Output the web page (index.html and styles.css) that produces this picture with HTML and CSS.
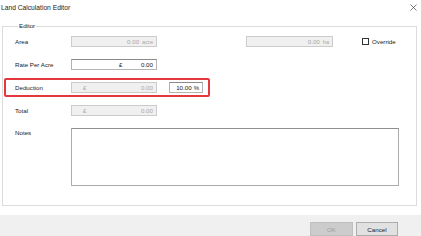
FILE: index.html
```html
<!DOCTYPE html>
<html>
<head>
<meta charset="utf-8">
<link rel="stylesheet" href="styles.css">
</head>
<body>
<div class="window">
  <div class="titlebar">
    <span class="title">Land Calculation Editor</span>
    <svg class="close" width="7" height="7" viewBox="0 0 7 7"><path d="M0.5 0.5L6.5 6.5M6.5 0.5L0.5 6.5" stroke="#444" stroke-width="0.7" fill="none"/></svg>
  </div>
  <div class="content">
    <fieldset class="group">
      <legend class="legend">Editor</legend>
      <div class="rows">
        <div class="row">
          <span class="label">Area</span>
          <div class="box disabled w86"><span class="num">0.00</span><span class="unit">acre</span></div>
          <div class="box disabled w87 ml-ha"><span class="num">0.00</span><span class="unit">ha</span></div>
          <span class="check"></span><span class="check-label">Override</span>
        </div>
        <div class="row">
          <span class="label">Rate Per Acre</span>
          <div class="box w86 boxed"><span class="cur cur-near">£</span><span class="num">0.00</span></div>
        </div>
        <div class="row">
          <span class="label">Deduction</span>
          <div class="box disabled w86"><span class="cur">£</span><span class="num">0.00</span></div>
          <div class="box boxed w34 ml-pct"><span class="num">10.00</span><span class="unit pct">%</span></div>
        </div>
        <div class="row">
          <span class="label">Total</span>
          <div class="box disabled w86"><span class="cur">£</span><span class="num">0.00</span></div>
        </div>
        <div class="row notes-row">
          <span class="label notes-label">Notes</span>
          <div class="notes"></div>
        </div>
      </div>
    </fieldset>
  </div>
  <div class="footer">
    <button class="btn btn-disabled">OK</button>
    <button class="btn">Cancel</button>
  </div>
  <div class="highlight"></div>
</div>
</body>
</html>
```

FILE: styles.css
```css
html, body {
  margin: 0;
  padding: 0;
  background: #ffffff;
}
.window {
  position: relative;
  width: 421px;
  height: 236px;
  display: flex;
  flex-direction: column;
  background: #ffffff;
  font-family: "Liberation Sans", Arial, sans-serif;
  font-size: 6.2px;
  color: #1a1a1a;
  overflow: hidden;
}
.titlebar {
  height: 14px;
  display: flex;
  align-items: center;
  justify-content: space-between;
  padding: 0 4px 0 1px;
}
.title {
  font-size: 6.7px;
  color: #1a1a1a;
}
.close {
  display: block;
}
.content {
  flex: 1;
  padding: 8px 4px 9px 2px;
  display: flex;
}
.group {
  flex: 1;
  margin: 0;
  padding: 6px 12px 0 12px;
  border: 1px solid #dcdcdc;
  min-width: 0;
}
.legend {
  margin-left: 3px;
  padding: 0 1px;
  line-height: 8px;
  font-size: 6.2px;
}
.rows {
  display: flex;
  flex-direction: column;
  gap: 12px;
}
.row {
  display: flex;
  align-items: center;
  height: 11px;
}
.label {
  width: 56px;
  flex: none;
}
.box {
  box-sizing: border-box;
  height: 11px;
  display: flex;
  align-items: center;
  justify-content: flex-end;
  padding: 0 3px;
  border: 1px solid #cccccc;
  background: #f0f0f0;
  color: #a8a8a8;
}
.boxed {
  background: #ffffff;
  border-color: #b4b4b4;
  border-top-color: #8a8a8a;
  color: #1a1a1a;
}
.w86 { width: 86px; }
.w87 { width: 87px; }
.w34 { width: 34px; }
.ml-ha { margin-left: 89px; }
.ml-pct { margin-left: 12px; }
.unit {
  margin-left: 3px;
  font-size: 5.6px;
}
.pct {
  margin-left: 2px;
  font-size: 6px;
}
.cur {
  margin-right: auto;
  margin-left: 8px;
}
.cur-near {
  margin-left: 44px;
}
.check {
  box-sizing: border-box;
  width: 7px;
  height: 7px;
  border: 1px solid #333;
  background: #fff;
  margin-left: 29px;
}
.check-label {
  margin-left: 3px;
}
.notes-row {
  height: 58px;
  align-items: flex-start;
}
.notes-label {
  padding-top: 1px;
}
.notes {
  box-sizing: border-box;
  width: 328px;
  height: 58px;
  border: 1px solid #ababab;
  border-top-color: #8f8f8f;
  background: #fff;
}
.footer {
  height: 21px;
  background: #f0f0f0;
  display: flex;
  justify-content: flex-end;
  align-items: flex-start;
  gap: 3px;
  padding: 7px 23px 0 0;
  box-sizing: border-box;
}
.btn {
  box-sizing: border-box;
  height: 14px;
  width: 42px;
  padding: 0;
  margin: 0;
  font-family: "Liberation Sans", Arial, sans-serif;
  font-size: 6.2px;
  background: #e1e1e1;
  border: 1px solid #adadad;
  color: #1a1a1a;
  border-radius: 0;
}
.btn-disabled {
  width: 43px;
  background: #cccccc;
  border-color: #bfbfbf;
  color: #a0a0a0;
}
.highlight {
  position: absolute;
  left: 4px;
  top: 78px;
  width: 206px;
  height: 19px;
  box-sizing: border-box;
  border: 2px solid #e5383e;
  border-radius: 2px;
}
```
